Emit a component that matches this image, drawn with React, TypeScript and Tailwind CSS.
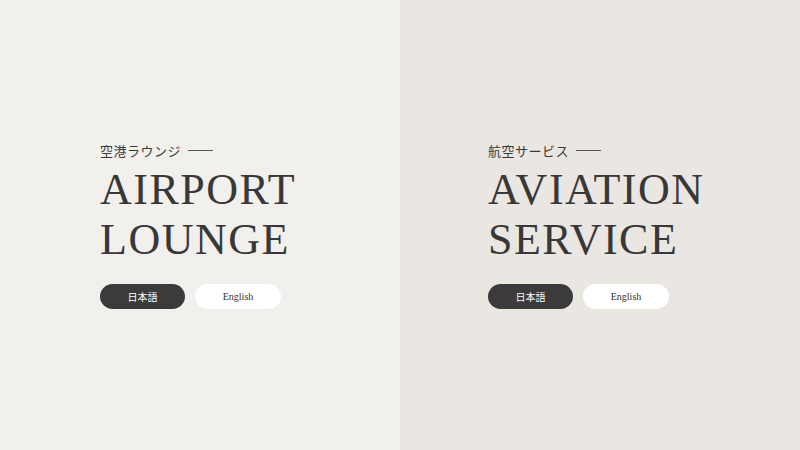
export default function App() {
  const serif = { fontFamily: '"Liberation Serif", "Times New Roman", serif' };
  const jp = { fontFamily: '"Noto Sans CJK JP", sans-serif' };
  const Panel = ({ bg, pl, sub, l1, l2 }: { bg: string; pl: string; sub: string; l1: string; l2: string }) => (
    <div className={`w-[400px] shrink-0 h-full flex flex-col justify-center ${bg} ${pl}`}>
      <div className="flex items-center gap-[7px] text-[13px] text-[#3a3a3a] tracking-[0.04em]" style={jp}>
        <span>{sub}</span>
        <span className="w-[25px] h-px bg-[#555]" />
      </div>
      <div className="mt-[5px] text-[44px] leading-[50px] text-[#383838] tracking-[1.5px]" style={serif}>
        <div>{l1}</div>
        <div>{l2}</div>
      </div>
      <div className="mt-[19px] flex gap-[10px]">
        <div className="w-[85px] h-[25px] rounded-full bg-[#3b3b3b] text-white text-[10px] flex items-center justify-center" style={jp}>日本語</div>
        <div className="w-[86px] h-[25px] rounded-full bg-white text-[#333] text-[10px] flex items-center justify-center" style={serif}>English</div>
      </div>
    </div>
  );
  return (
    <div className="w-[800px] h-[450px] flex">
      <Panel bg="bg-[#f2f0ed]" pl="pl-[100px]" sub="空港ラウンジ" l1="AIRPORT" l2="LOUNGE" />
      <Panel bg="bg-[#eae6e2]" pl="pl-[88px]" sub="航空サービス" l1="AVIATION" l2="SERVICE" />
    </div>
  );
}
